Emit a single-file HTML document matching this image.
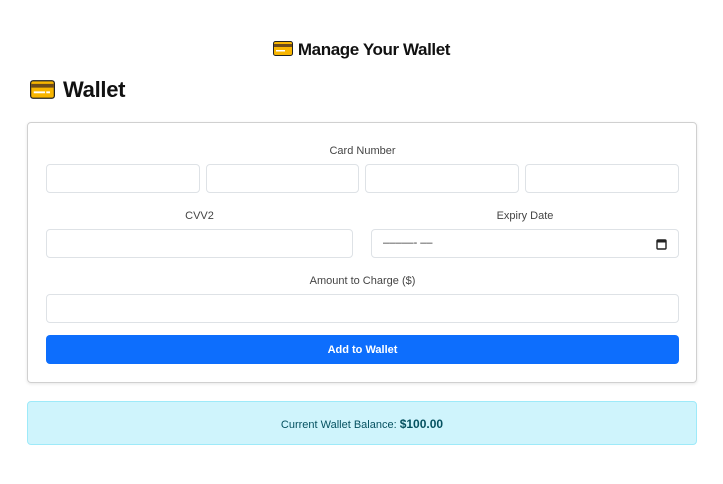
<!DOCTYPE html>
<html><head><meta charset="utf-8"><style>
*{box-sizing:border-box;margin:0;padding:0}
body{width:723px;height:484px;background:#fff;font-family:"Liberation Sans",sans-serif;color:#212529;position:relative;overflow:hidden}
.a{position:absolute}
.lbl{position:absolute;font-size:11px;color:#444;text-align:center}
.in{position:absolute;height:29px;border:1px solid #dee2e6;border-radius:4px;background:#fff}
</style></head><body>
<div class="a" style="left:0;width:723px;top:40px;text-align:center;font-size:17px;font-weight:bold;color:#111;letter-spacing:-0.4px">
<svg width="20" height="15" viewBox="0 0 20 15" style="vertical-align:-1px;margin-right:5px"><rect x="0.5" y="0.5" width="19" height="14" rx="2" fill="#f7b500" stroke="#222"/><rect x="1" y="3" width="18" height="3" fill="#6b4a1a"/><rect x="3" y="9" width="9" height="1.5" fill="#fff"/></svg>Manage Your Wallet</div>
<div class="a" style="left:30px;top:77px;font-size:22px;font-weight:bold;color:#111;letter-spacing:-0.3px">
<svg width="25" height="19" viewBox="0 0 20 15" style="vertical-align:-2px;margin-right:8px"><rect x="0.5" y="0.5" width="19" height="14" rx="2" fill="#f7b500" stroke="#222"/><rect x="1" y="3" width="18" height="3" fill="#6b4a1a"/><rect x="3" y="9" width="9" height="1.5" fill="#fff"/><rect x="13" y="9" width="3" height="1.5" fill="#fff"/></svg>Wallet</div>
<div class="a" style="left:27px;top:122px;width:670px;height:261px;border:1px solid #d0d0d0;border-radius:4px;box-shadow:0 1px 3px rgba(0,0,0,.1)"></div>
<div class="lbl" style="left:46px;width:633px;top:145px">Card Number</div>
<div class="in" style="left:46px;top:164px;width:154px"></div>
<div class="in" style="left:206px;top:164px;width:153px"></div>
<div class="in" style="left:365px;top:164px;width:154px"></div>
<div class="in" style="left:525px;top:164px;width:154px"></div>
<div class="lbl" style="left:46px;width:307px;top:210px">CVV2</div>
<div class="lbl" style="left:371px;width:308px;top:210px">Expiry Date</div>
<div class="in" style="left:46px;top:229px;width:307px"></div>
<div class="in" style="left:371px;top:229px;width:308px"><span class="a" style="left:11px;top:7px;font-size:11px;color:#333">–––––- ––</span>
<svg class="a" style="left:284px;top:8px" width="11" height="12" viewBox="0 0 11 12"><rect x="1" y="2" width="9" height="9" rx="1" fill="none" stroke="#222" stroke-width="1.4"/><rect x="1" y="2" width="9" height="2.5" fill="#222"/></svg></div>
<div class="lbl" style="left:46px;width:633px;top:275px">Amount to Charge ($)</div>
<div class="in" style="left:46px;top:294px;width:633px"></div>
<div class="a" style="left:46px;top:335px;width:633px;height:29px;background:#0d6efd;border-radius:4px;color:#fff;font-size:11px;font-weight:bold;text-align:center;line-height:31px">Add to Wallet</div>
<div class="a" style="left:27px;top:401px;width:670px;height:44px;background:#cff4fc;border:1px solid #9eeaf9;border-radius:4px;color:#055160;font-size:11px;text-align:center;line-height:44px">Current Wallet Balance: <b style="font-size:12px">$100.00</b></div>
</body></html>
